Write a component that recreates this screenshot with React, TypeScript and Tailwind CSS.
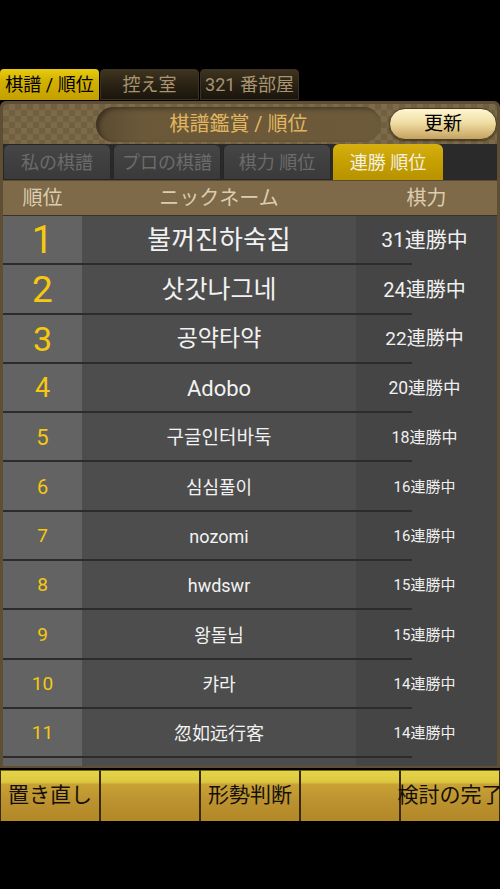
import React from "react";

const CJK = { fontFamily: 'Roboto, "Noto Sans CJK JP", sans-serif' };
const KR = { fontFamily: 'Roboto, "Noto Sans CJK KR", sans-serif' };
const SC = { fontFamily: 'Roboto, "Noto Sans CJK SC", sans-serif' };

type Row = { rank: number; name: string; score: number; rs: number; ns: number; ss: number; f?: any };

const rows: Row[] = [
  { rank: 1, name: "불꺼진하숙집", score: 31, rs: 38, ns: 26, ss: 21, f: KR },
  { rank: 2, name: "삿갓나그네", score: 24, rs: 37, ns: 25, ss: 20, f: KR },
  { rank: 3, name: "공약타약", score: 22, rs: 34, ns: 23, ss: 19, f: KR },
  { rank: 4, name: "Adobo", score: 20, rs: 27, ns: 22, ss: 17.5, f: KR },
  { rank: 5, name: "구글인터바둑", score: 18, rs: 22, ns: 19, ss: 16, f: KR },
  { rank: 6, name: "심심풀이", score: 16, rs: 20, ns: 18, ss: 15, f: KR },
  { rank: 7, name: "nozomi", score: 16, rs: 19, ns: 18, ss: 15, f: KR },
  { rank: 8, name: "hwdswr", score: 15, rs: 19, ns: 18, ss: 15, f: KR },
  { rank: 9, name: "왕돌님", score: 15, rs: 19, ns: 18, ss: 15, f: KR },
  { rank: 10, name: "캬라", score: 14, rs: 19, ns: 18, ss: 15, f: KR },
  { rank: 11, name: "忽如远行客", score: 14, rs: 19, ns: 18, ss: 15, f: SC },
  { rank: 12, name: "", score: 0, rs: 19, ns: 17, ss: 15, f: KR },
];

function TopTab({ label, active }: { label: string; active?: boolean }) {
  return active ? (
    <div className="w-[99px] h-[31px] mr-[1px] rounded-t-[4px] bg-[linear-gradient(to_bottom,#e8cc10,#d2b000_40%,#c4a000)] flex items-center justify-center text-[18px] text-black" style={CJK}>
      {label}
    </div>
  ) : (
    <div className="w-[99px] h-[31px] mr-[1px] rounded-t-[4px] border border-[#3a3222] bg-[linear-gradient(to_bottom,#3e3420,#2a2214_50%,#1a150c)] flex items-center justify-center text-[18px] text-[#a89472]" style={CJK}>
      {label}
    </div>
  );
}

function SubTab({ label, active, w }: { label: string; active?: boolean; w: string }) {
  return active ? (
    <div className={`${w} h-[36px] rounded-t-[6px] bg-[linear-gradient(to_bottom,#d6b010,#c6a000_50%,#b89200)] flex items-center justify-center text-[18px] text-[#f4f0e0]`} style={CJK}>
      {label}
    </div>
  ) : (
    <div className={`${w} h-[36px] rounded-t-[6px] border border-[#262626] bg-[linear-gradient(to_bottom,#454545,#3a3a3a)] flex items-center justify-center text-[18px] text-[#6c6c6c]`} style={CJK}>
      {label}
    </div>
  );
}

function BottomBtn({ label }: { label: string }) {
  return (
    <div className="w-[100px] h-[51px] shrink-0 border-x border-[#3a2a0c] border-t border-t-[#7a6418] bg-[linear-gradient(to_bottom,#e4d44a_0%,#dcc840_22%,#c8a234_27%,#bc9230_60%,#b28828_100%)] flex items-center justify-center overflow-visible whitespace-nowrap text-[21px] text-[#141008]" style={CJK}>
      {label}
    </div>
  );
}

export default function App() {
  return (
    <div className="w-[500px] h-[889px] bg-black flex flex-col overflow-hidden">
      <div className="h-[69px] shrink-0" />
      <div className="h-[31px] shrink-0 flex">
        <TopTab label="棋譜 / 順位" active />
        <TopTab label="控え室" />
        <TopTab label="321 番部屋" />
      </div>
      <div className="h-[1px] shrink-0" />
      {/* Panel */}
      <div className="h-[667px] shrink-0 rounded-t-[6px] border-[3px] border-b-[2px] border-[#5e4e34] bg-[#2a2a2a] flex flex-col overflow-hidden">
        {/* Title bar */}
        <div className="h-[40px] shrink-0 relative flex items-center bg-[repeating-conic-gradient(#7c6a4a_0_25%,#716040_0_50%)] bg-[length:12px_12px]">
          <div className="ml-[93px] w-[285px] h-[35px] rounded-full bg-[linear-gradient(to_right,#5a4a30,#6a5838_15%,#6c5a3a)] shadow-[inset_3px_2px_4px_rgba(0,0,0,0.35)] flex items-center justify-center text-[20px] text-[#e2b660]" style={CJK}>
            棋譜鑑賞 / 順位
          </div>
          <div className="ml-[8px] w-[108px] h-[32px] rounded-full border border-[#4a3c22] bg-[linear-gradient(to_bottom,#fff6d2,#f0dea4_45%,#d6b878_80%,#c4a260)] shadow-[0_1px_2px_rgba(0,0,0,0.5)] flex items-center justify-center text-[19px] text-black" style={CJK}>
            更新
          </div>
        </div>
        {/* Sub tabs */}
        <div className="h-[36px] shrink-0 flex gap-[2px] bg-[#2a2a2a]">
          <SubTab label="私の棋譜" w="w-[108px]" />
          <SubTab label="プロの棋譜" w="w-[108px]" />
          <SubTab label="棋力 順位" w="w-[108px]" />
          <SubTab label="連勝 順位" w="w-[110px]" active />
        </div>
        {/* Header */}
        <div className="h-[36px] shrink-0 flex items-center bg-[#7e6948] border-t border-[#5a4a30] border-b border-b-[#3a3226] text-[20px] text-[#dccdb0]" style={CJK}>
          <div className="w-[79px] text-center">順位</div>
          <div className="w-[274px] text-center">ニックネーム</div>
          <div className="flex-1 text-center">棋力</div>
        </div>
        {/* Rows */}
        <div className="flex-1 flex flex-col overflow-hidden">
          {rows.map((r) => (
            <div key={r.rank} className="h-[49.3px] shrink-0 relative flex bg-[#454545]">
              <div className="w-[79px] h-full bg-[#636363] flex items-center justify-center text-[#f6c810]" style={{ ...CJK, fontSize: r.rs }}>
                {r.name ? r.rank : ""}
              </div>
              <div className="w-[274px] h-full bg-[#4d4d4d] flex items-center justify-center text-[#f2f2f2] whitespace-nowrap" style={{ ...r.f, fontSize: r.ns }}>
                {r.name}
              </div>
              <div className="flex-1 h-full flex items-center justify-center pr-[4px] text-[#f0f0f0] whitespace-nowrap" style={{ ...CJK, fontSize: r.ss }}>
                {r.name ? `${r.score}連勝中` : ""}
              </div>
              <div className="absolute left-0 bottom-0 w-[409px] h-[2px] bg-[#2c2c2c]" />
            </div>
          ))}
        </div>
      </div>
      <div className="h-[2px] shrink-0" />
      {/* Bottom buttons */}
      <div className="h-[51px] shrink-0 flex overflow-hidden">
        <BottomBtn label="置き直し" />
        <BottomBtn label="" />
        <BottomBtn label="形勢判断" />
        <BottomBtn label="" />
        <BottomBtn label="検討の完了" />
      </div>
    </div>
  );
}
